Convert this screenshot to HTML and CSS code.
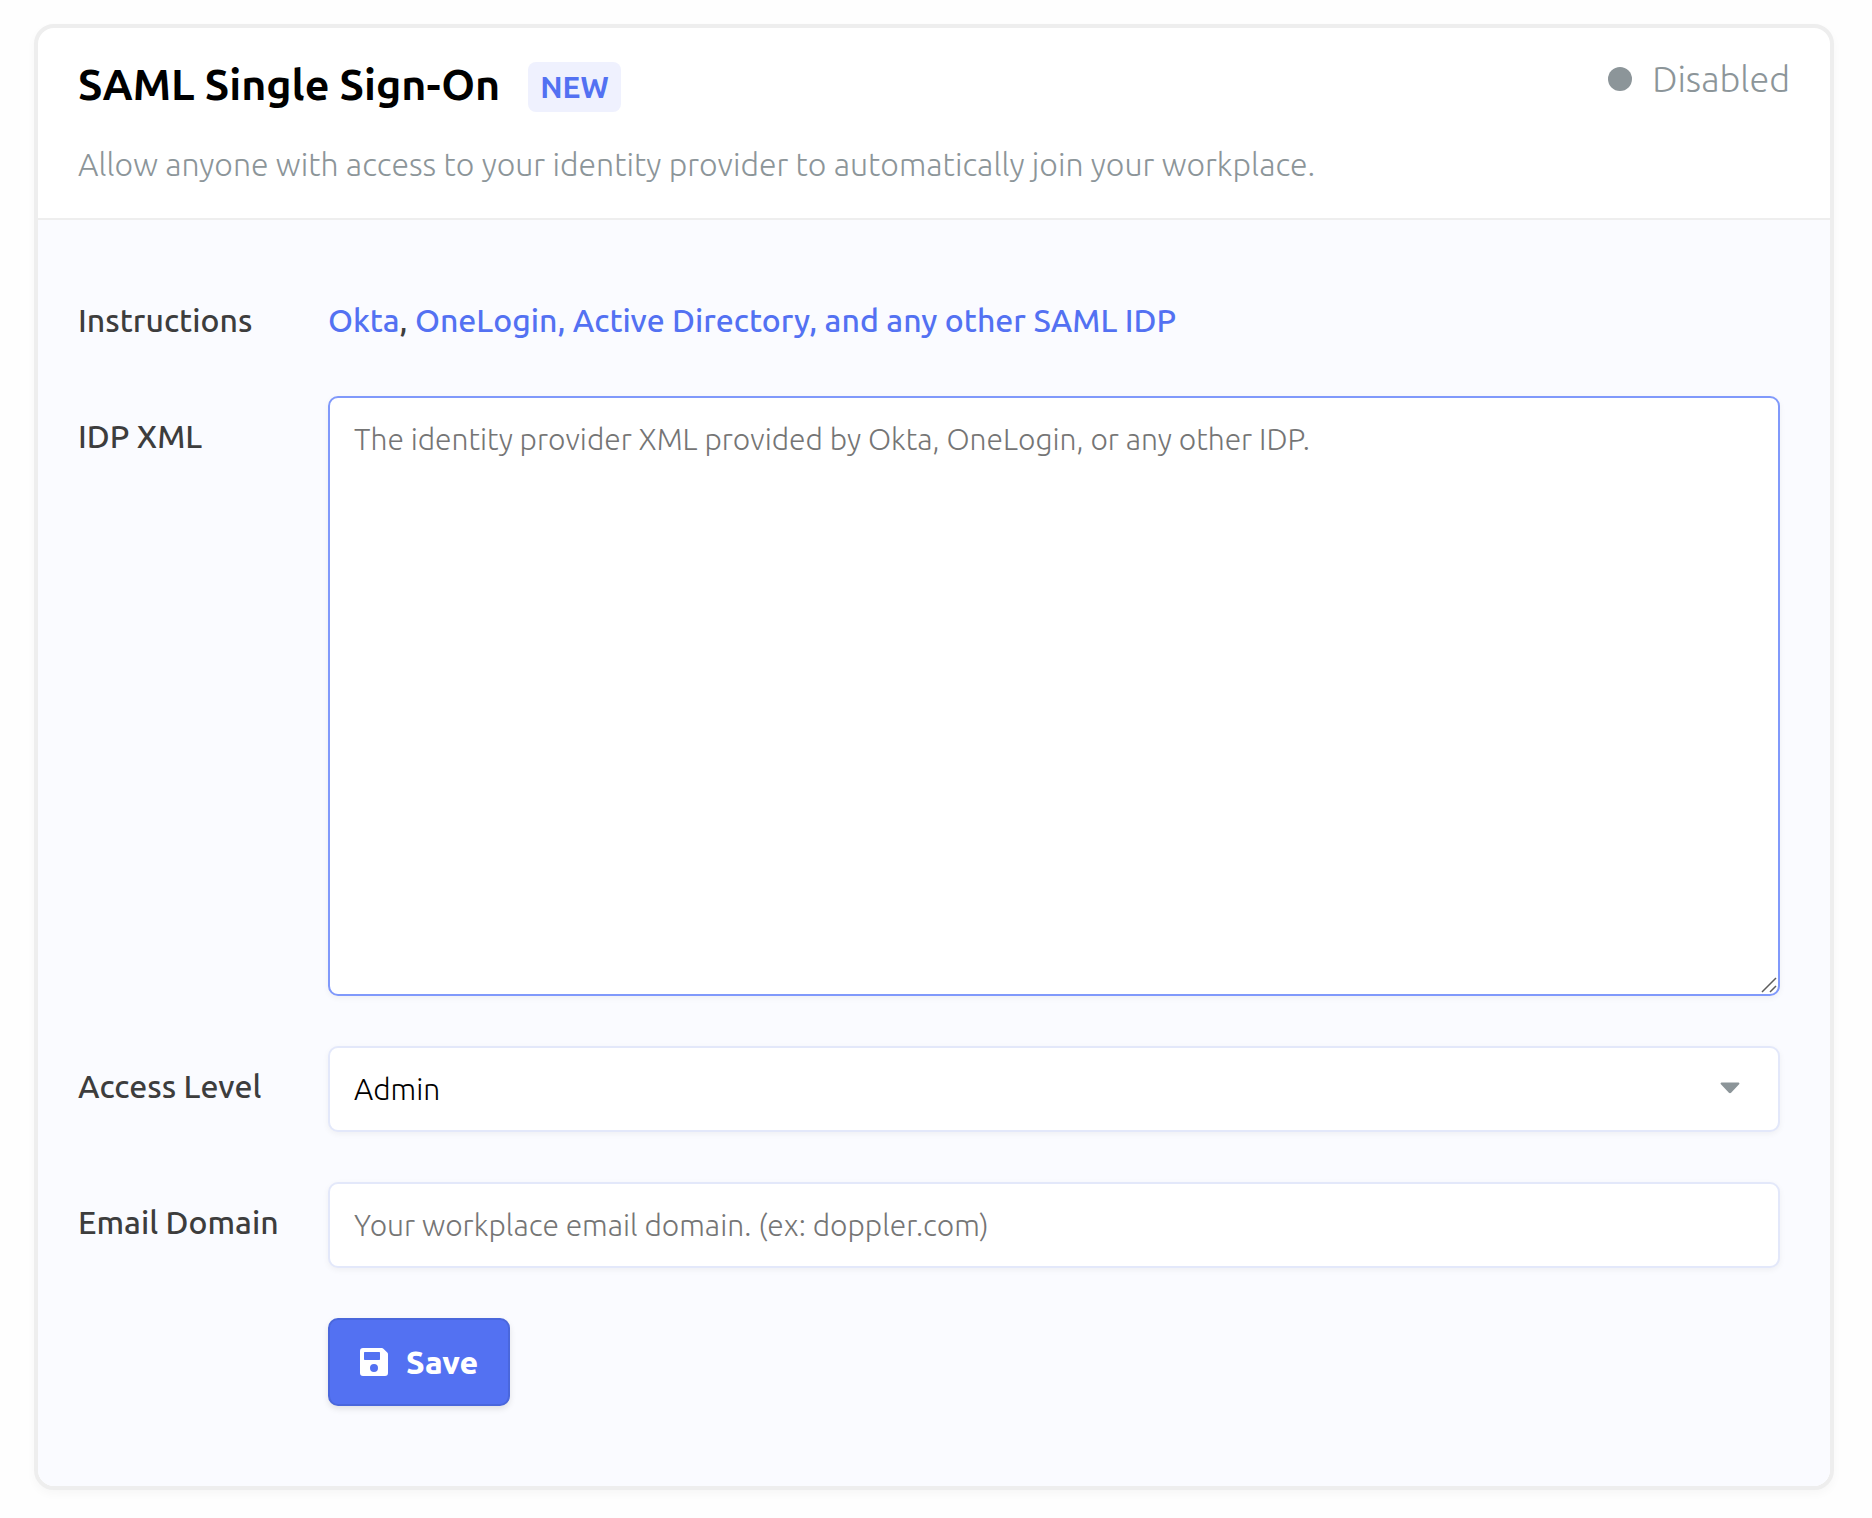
FILE: index.html
```html
<!DOCTYPE html>
<html lang="en">
<head>
  <meta charset="UTF-8">
  <meta name="viewport" content="width=device-width, initial-scale=1.0">
  <title>SAML Single Sign-On</title>
  <link rel="stylesheet" href="styles.css">
</head>
<body>
  <section class="card">
    <header class="card-header">
      <div class="card-heading">
        <div class="title-row">
          <h1>SAML Single Sign-On</h1>
          <span class="badge">NEW</span>
        </div>
        <p class="description">Allow anyone with access to your identity provider to automatically join your workplace.</p>
      </div>
      <div class="status"><span class="status-dot"></span>Disabled</div>
    </header>

    <form class="card-body">
      <div class="row">
        <span class="label">Instructions</span>
        <p class="links"><a href="#okta">Okta</a>, <a href="#other">OneLogin, Active Directory, and any other SAML IDP</a></p>
      </div>

      <div class="row">
        <label class="label field-label" for="idpXml">IDP XML</label>
        <div class="control">
          <textarea id="idpXml" class="field active" placeholder="The identity provider XML provided by Okta, OneLogin, or any other IDP."></textarea>
          <svg class="resize-grip" width="16" height="16" viewBox="0 0 16 16" fill="none" stroke="#5c5c5c" stroke-width="1.5">
            <path d="M1 15L15 1M9 15L15 9"/>
          </svg>
        </div>
      </div>

      <div class="row">
        <label class="label field-label" for="accessLevel">Access Level</label>
        <div class="control">
          <select id="accessLevel" class="field">
            <option>Admin</option>
            <option>Collaborator</option>
          </select>
          <svg class="caret" width="20" height="12" viewBox="0 0 20 12" fill="#8c9599">
            <path d="M1.6 0.5h16.8c1 0 1.4 1.1.7 1.8l-8 8.4c-.6.6-1.6.6-2.2 0l-8-8.4c-.7-.7-.3-1.8.7-1.8z"/>
          </svg>
        </div>
      </div>

      <div class="row">
        <label class="label field-label" for="emailDomain">Email Domain</label>
        <div class="control">
          <input type="text" id="emailDomain" class="field" placeholder="Your workplace email domain. (ex: doppler.com)">
        </div>
      </div>

      <div class="row">
        <span class="label"></span>
        <button type="submit" class="save-button">
          <svg width="28" height="28" viewBox="0 0 28 28" fill="#fff">
            <path fill-rule="evenodd" d="M3 0h18.8c.6 0 1.2.2 1.6.7l3.9 3.9c.5.4.7 1 .7 1.6V25a3 3 0 0 1-3 3H3a3 3 0 0 1-3-3V3a3 3 0 0 1 3-3zM4.700 4a.7.7 0 0 0-.7.7v6.600c0 .4.3.7.7.7h14.600c.4 0 .7-.3.7-.7V4.700a.7.7 0 0 0-.7-.7zM14 16a4 4 0 1 0 0 8 4 4 0 0 0 0-8z"/>
          </svg>
          Save
        </button>
      </div>
    </form>
  </section>
</body>
</html>
```
FILE: styles.css
```css
* {
  box-sizing: border-box;
}

body {
  font-family: Ubuntu, "Open Sans", "Noto Sans", sans-serif;
  background-color: #fefefe;
  margin: 0;
  padding: 24px 38px 28px 34px;
}

h1, p {
  margin: 0;
}

.card {
  background: #ffffff;
  border: 4px solid #eeeeee;
  border-radius: 20px;
  box-shadow: 0 4px 10px rgba(0, 0, 0, 0.03);
  overflow: hidden;
}

.card-header {
  display: flex;
  justify-content: space-between;
  align-items: flex-start;
  padding: 26px 40px 30px 40px;
  border-bottom: 2px solid #eeeeee;
}

.title-row {
  display: flex;
  align-items: flex-start;
  gap: 28px;
}

h1 {
  font-size: 43px;
  font-weight: 600;
  line-height: 60px;
  color: #000000;
}

.badge {
  margin-top: 8px;
  padding: 0 12px;
  border-radius: 8px;
  background-color: #eff1fe;
  color: #5371f2;
  font-size: 30px;
  font-weight: 600;
  line-height: 50px;
}

.description {
  margin-top: 26px;
  color: #8c9599;
  font-size: 32px;
  font-weight: 300;
  line-height: 48px;
}

.status {
  display: flex;
  align-items: center;
  gap: 20px;
  color: #8c9599;
  font-size: 36px;
  font-weight: 300;
  line-height: 50px;
}

.status-dot {
  width: 24px;
  height: 24px;
  border-radius: 50%;
  background-color: #8c9599;
}

.card-body {
  display: flex;
  flex-direction: column;
  gap: 50px;
  padding: 76px 50px 80px 40px;
  background-color: #fafbff;
}

.row {
  display: flex;
  align-items: flex-start;
  min-height: 50px;
}

.label {
  flex: 0 0 250px;
  color: #3d3d3d;
  font-size: 32px;
  font-weight: 500;
  line-height: 48px;
}

.field-label {
  padding-top: 16px;
}

.links {
  color: #3d3d3d;
  font-size: 32px;
  font-weight: 500;
  line-height: 48px;
}

.links a {
  color: #5371f2;
  text-decoration: none;
}

.control {
  position: relative;
  flex: 1;
}

.field {
  display: block;
  width: 100%;
  height: 86px;
  padding: 0 24px;
  border: 2px solid #e3e8fa;
  border-radius: 10px;
  background-color: #ffffff;
  box-shadow: 0 2px 6px rgba(0, 0, 0, 0.05);
  color: #000000;
  font-family: inherit;
  font-size: 30px;
  font-weight: 300;
  line-height: 38px;
  appearance: none;
  outline: none;
}

.field::placeholder {
  color: #757575;
}

.active,
.field:focus {
  border-color: #8099fb;
}

textarea.field {
  height: 600px;
  padding: 22px 24px;
  resize: vertical;
}

textarea.field::-webkit-resizer {
  background: transparent;
}

.resize-grip {
  position: absolute;
  right: 3px;
  bottom: 3px;
  pointer-events: none;
}

.caret {
  position: absolute;
  right: 40px;
  top: 36px;
  pointer-events: none;
}

.save-button {
  display: flex;
  align-items: center;
  gap: 18px;
  height: 88px;
  padding: 0 30px;
  border: 2px solid #4a67dc;
  border-radius: 10px;
  background-color: #5371f2;
  box-shadow: 0 3px 6px rgba(0, 0, 0, 0.1);
  color: #ffffff;
  font-family: inherit;
  font-size: 32px;
  font-weight: 800;
  cursor: pointer;
}

.save-button:hover {
  background-color: #4a67dc;
}

@media (max-width: 900px) {
  .row {
    flex-direction: column;
  }

  .label {
    flex-basis: auto;
  }

  .control {
    width: 100%;
  }
}
```
